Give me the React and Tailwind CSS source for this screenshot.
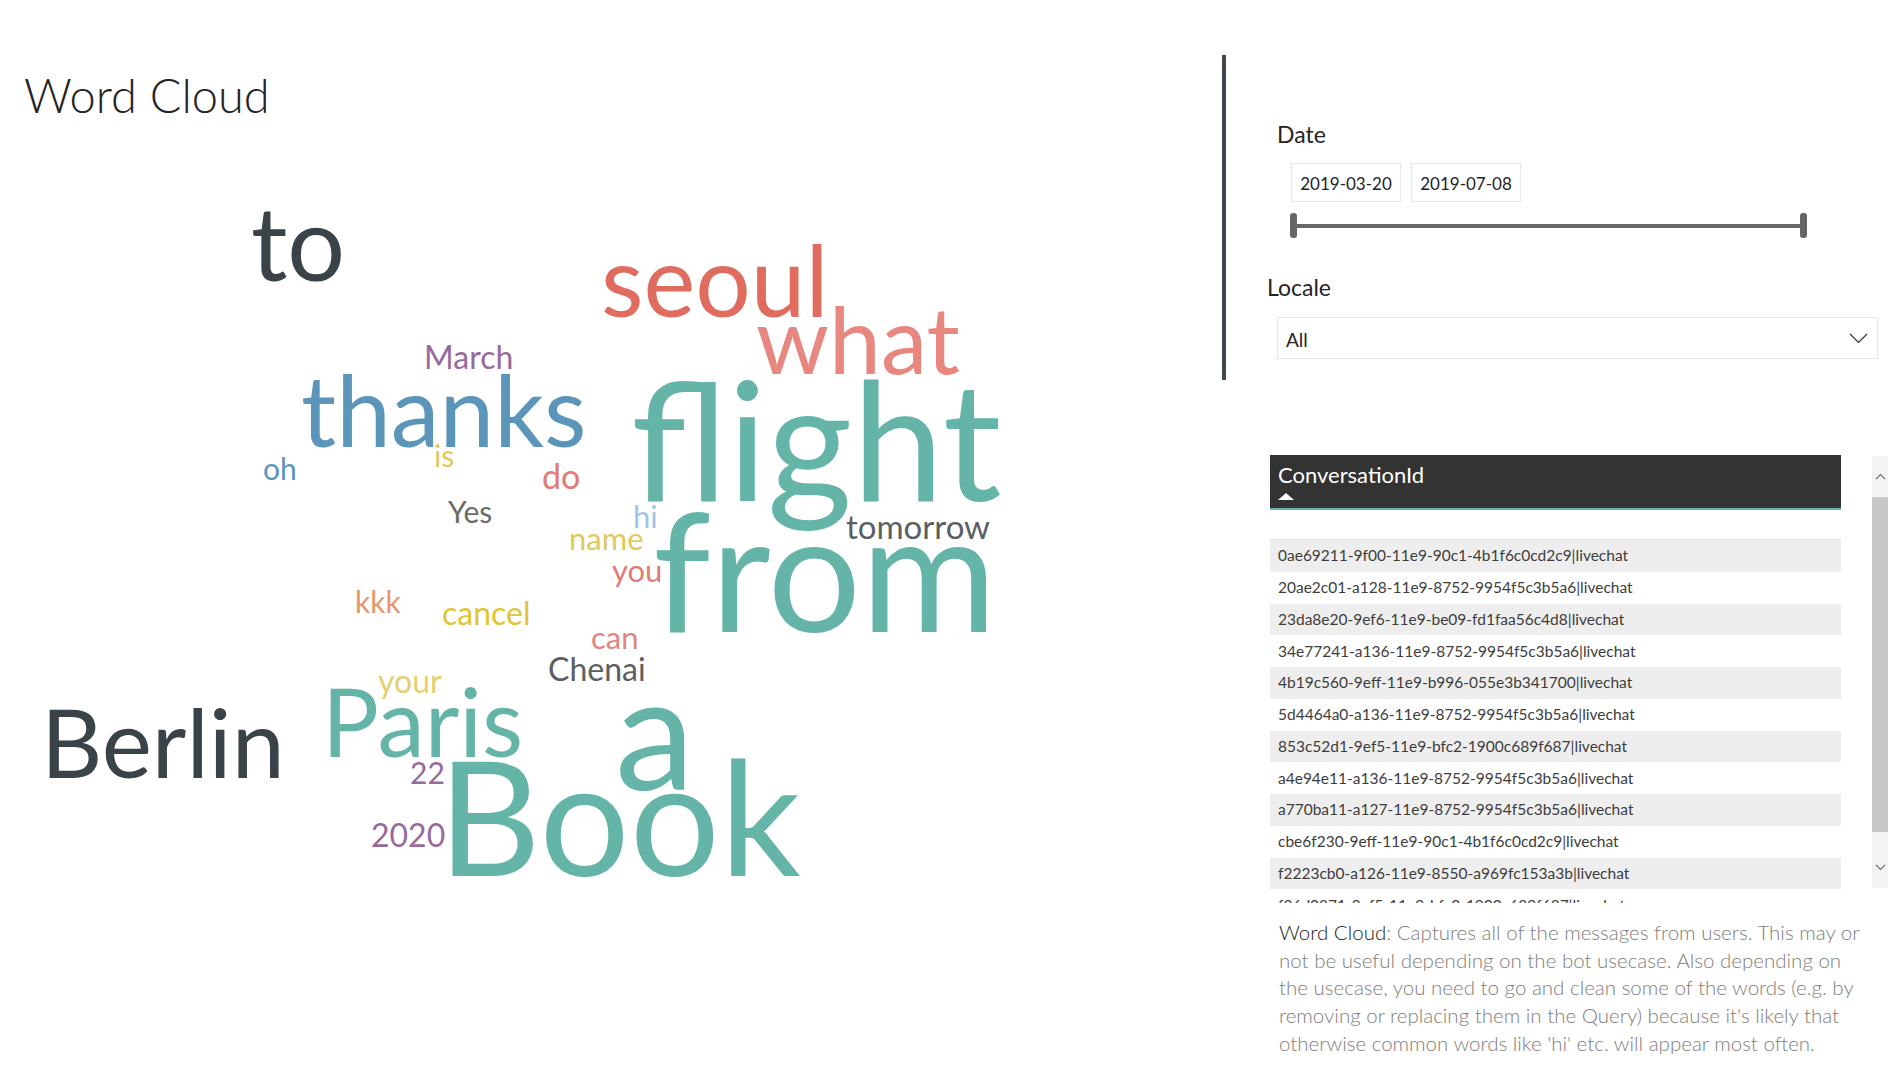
import React from "react";

// word cloud: positions are the content of the visual, so they sit on a free canvas
const WORDS = [
  { t: "to", c: "left-[251px] top-[72px] text-[102px] text-[#3a4448]" },
  { t: "seoul", c: "left-[601px] top-[111px] text-[98px] text-[#e06b5f]" },
  { t: "what", c: "left-[756px] top-[173px] text-[93px] text-[#e8877f]" },
  { t: "March", c: "left-[424px] top-[222px] text-[32px] text-[#99699c]" },
  { t: "thanks", c: "left-[301px] top-[241px] text-[98px] text-[#5b96ba]" },
  { t: "flight", c: "left-[631px] top-[237px] text-[164px] text-[#64b5a7]" },
  { t: "oh", c: "left-[263px] top-[334px] text-[30px] text-[#5b96ba]" },
  { t: "is", c: "left-[434px] top-[321px] text-[30px] text-[#e3c85a]" },
  { t: "do", c: "left-[542px] top-[340px] text-[34px] text-[#e07b76]" },
  { t: "Yes", c: "left-[448px] top-[377px] text-[30px] text-[#6b6b6b]" },
  { t: "hi", c: "left-[633px] top-[382px] text-[31px] text-[#9fc6e6]" },
  { t: "tomorrow", c: "left-[846px] top-[391px] text-[33px] text-[#5c5f62]" },
  { t: "name", c: "left-[569px] top-[404px] text-[31px] text-[#e3c85a]" },
  { t: "from", c: "left-[653px] top-[367px] text-[165px] text-[#64b5a7]" },
  { t: "you", c: "left-[612px] top-[436px] text-[31px] text-[#e07b76]" },
  { t: "kkk", c: "left-[355px] top-[467px] text-[30px] text-[#e8956b]" },
  { t: "cancel", c: "left-[442px] top-[478px] text-[32px] text-[#e2c435]" },
  { t: "can", c: "left-[591px] top-[503px] text-[31px] text-[#e38580]" },
  { t: "Chenai", c: "left-[548px] top-[534px] text-[32px] text-[#5c5f62]" },
  { t: "your", c: "left-[378px] top-[546px] text-[32px] text-[#e6cf6e]" },
  { t: "Paris", c: "left-[322px] top-[554px] text-[95px] text-[#64b5a7]" },
  { t: "a", c: "left-[615px] top-[529px] text-[160px] text-[#64b5a7]" },
  { t: "Berlin", c: "left-[41px] top-[575px] text-[95px] text-[#3a4448]" },
  { t: "22", c: "left-[410px] top-[638px] text-[30px] text-[#99699c]" },
  { t: "2020", c: "left-[371px] top-[700px] text-[32px] text-[#99699c]" },
  { t: "Book", c: "left-[438px] top-[616px] text-[159px] text-[#64b5a7]" },
];

const ROWS = [
  "0ae69211-9f00-11e9-90c1-4b1f6c0cd2c9|livechat",
  "20ae2c01-a128-11e9-8752-9954f5c3b5a6|livechat",
  "23da8e20-9ef6-11e9-be09-fd1faa56c4d8|livechat",
  "34e77241-a136-11e9-8752-9954f5c3b5a6|livechat",
  "4b19c560-9eff-11e9-b996-055e3b341700|livechat",
  "5d4464a0-a136-11e9-8752-9954f5c3b5a6|livechat",
  "853c52d1-9ef5-11e9-bfc2-1900c689f687|livechat",
  "a4e94e11-a136-11e9-8752-9954f5c3b5a6|livechat",
  "a770ba11-a127-11e9-8752-9954f5c3b5a6|livechat",
  "cbe6f230-9eff-11e9-90c1-4b1f6c0cd2c9|livechat",
  "f2223cb0-a126-11e9-8550-a969fc153a3b|livechat",
  "f36d0871-9ef5-11e9-bfc2-1900c689f687|livechat",
];

function Chevron({ up }) {
  return (
    <svg width="11" height="7" viewBox="0 0 11 7" className="block">
      <path
        d={up ? "M1 6 L5.5 1.5 L10 6" : "M1 1 L5.5 5.5 L10 1"}
        fill="none"
        stroke="#6e6e6e"
        strokeWidth="1.1"
      />
    </svg>
  );
}

export default function App() {
  return (
    <div className="w-[1898px] h-[1087px] bg-white flex overflow-hidden font-['Lato','Open_Sans',sans-serif]">
      {/* Left: word cloud */}
      <div className="w-[1222px] shrink-0 flex flex-col">
        <div className="h-[119px] pt-[72px] pl-[24px]">
          <h1 className="text-[47px] leading-none font-light text-[#252423]">Word Cloud</h1>
        </div>
        <div className="relative flex-1">
          {WORDS.map((w) => (
            <span key={w.t} className={"absolute leading-none whitespace-nowrap " + w.c}>
              {w.t}
            </span>
          ))}
        </div>
      </div>

      {/* Right: slicers, table, notes */}
      <div className="w-[676px] shrink-0 flex flex-col">
        {/* slicers */}
        <div className="mt-[55px] h-[325px] border-l-4 border-[#41484c] flex flex-col">
          <div className="mt-[65px] ml-[51px] text-[23px] leading-[28px] text-[#252423]">Date</div>
          <div className="mt-[15px] ml-[65px] flex gap-[10px]">
            <div className="w-[110px] h-[39px] pt-[3px] border border-[#e8e8e8] flex items-center justify-center text-[17px] text-[#252423]">
              2019-03-20
            </div>
            <div className="w-[110px] h-[39px] pt-[3px] border border-[#e8e8e8] flex items-center justify-center text-[17px] text-[#252423]">
              2019-07-08
            </div>
          </div>
          <div className="mt-[11px] ml-[64px] w-[517px] h-[25px] flex items-center">
            <div className="w-[7px] h-[25px] rounded-[3px] bg-[#666666]" />
            <div className="flex-1 h-[4px] bg-[#666666]" />
            <div className="w-[7px] h-[25px] rounded-[3px] bg-[#666666]" />
          </div>
          <div className="mt-[35px] ml-[41px] text-[23px] leading-[28px] text-[#252423]">Locale</div>
          <div className="mt-[16px] ml-[51px] w-[601px] h-[42px] border border-[#e6e6e6] flex items-center justify-between pl-[8px] pr-[9px]">
            <span className="pt-[4px] text-[19px] text-[#252423]">All</span>
            <svg width="19" height="11" viewBox="0 0 19 11">
              <path d="M1 1 L9.5 9.5 L18 1" fill="none" stroke="#333" strokeWidth="1.2" />
            </svg>
          </div>
        </div>

        {/* table */}
        <div className="mt-[75px] ml-[48px] flex">
          <div className="w-[571px] h-[448px] overflow-hidden flex flex-col">
            <div className="h-[55px] shrink-0 bg-[#333333] border-b-2 border-[#64b5a7] pt-[6px] pl-[8px]">
              <div className="text-[22px] leading-[28px] text-white">ConversationId</div>
              <div className="mt-[4px] w-0 h-0 border-l-[8px] border-r-[8px] border-b-[7px] border-l-transparent border-r-transparent border-b-white" />
            </div>
            <div className="h-[30px] shrink-0 border-b border-[#e2e2e2]" />
            {ROWS.map((r, i) => (
              <div
                key={r}
                className={
                  "h-[31.75px] shrink-0 flex items-center pl-[8px] text-[15.5px] text-[#3d3d3d] whitespace-nowrap " +
                  (i % 2 === 0 ? "bg-[#eeeeee]" : "bg-white")
                }
              >
                {r}
              </div>
            ))}
          </div>
          <div className="ml-[31px] mt-[1px] w-[16px] h-[432px] bg-[#f3f3f3] flex flex-col">
            <div className="h-[41px] flex items-center justify-center">
              <Chevron up />
            </div>
            <div className="h-[335px] bg-[#c8c8c8]" />
            <div className="flex-1 flex items-end justify-center pb-[17px]">
              <Chevron />
            </div>
          </div>
        </div>

        {/* notes */}
        <div className="mt-[16px] ml-[57px] text-[20.5px] leading-[27.7px] font-light text-[#7f7d7b] whitespace-nowrap">
          <div>
            <span className="text-[#252423]">Word Cloud</span>: Captures all of the messages from users. This may or
          </div>
          <div>not be useful depending on the bot usecase. Also depending on</div>
          <div>the usecase, you need to go and clean some of the words (e.g. by</div>
          <div>removing or replacing them in the Query) because it's likely that</div>
          <div>otherwise common words like 'hi' etc. will appear most often.</div>
        </div>
      </div>
    </div>
  );
}
